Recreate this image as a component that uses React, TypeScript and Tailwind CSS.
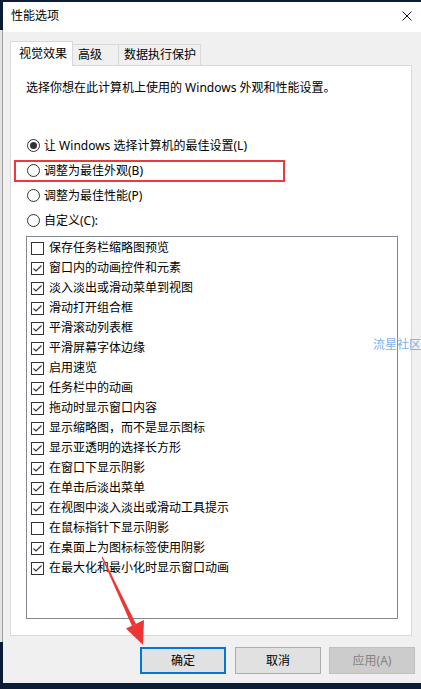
import React from 'react';

const font = { fontFamily: '"Noto Sans", "Noto Sans CJK SC", sans-serif' };

const radios = [
  { label: '让 Windows 选择计算机的最佳设置(L)', checked: true },
  { label: '调整为最佳外观(B)', checked: false },
  { label: '调整为最佳性能(P)', checked: false },
  { label: '自定义(C):', checked: false },
];

const options = [
  { label: '保存任务栏缩略图预览', checked: false },
  { label: '窗口内的动画控件和元素', checked: true },
  { label: '淡入淡出或滑动菜单到视图', checked: true },
  { label: '滑动打开组合框', checked: true },
  { label: '平滑滚动列表框', checked: true },
  { label: '平滑屏幕字体边缘', checked: true },
  { label: '启用速览', checked: true },
  { label: '任务栏中的动画', checked: true },
  { label: '拖动时显示窗口内容', checked: true },
  { label: '显示缩略图，而不是显示图标', checked: true },
  { label: '显示亚透明的选择长方形', checked: true },
  { label: '在窗口下显示阴影', checked: true },
  { label: '在单击后淡出菜单', checked: true },
  { label: '在视图中淡入淡出或滑动工具提示', checked: true },
  { label: '在鼠标指针下显示阴影', checked: false },
  { label: '在桌面上为图标标签使用阴影', checked: true },
  { label: '在最大化和最小化时显示窗口动画', checked: true },
];

const Radio = ({ checked }: { checked: boolean }) => (
  <span className="flex h-[13px] w-[13px] shrink-0 items-center justify-center rounded-full border border-[#333333] bg-white">
    {checked && <span className="h-[7px] w-[7px] rounded-full bg-[#333333]" />}
  </span>
);

const Check = ({ checked }: { checked: boolean }) => (
  <span className="flex h-[13px] w-[13px] shrink-0 items-center justify-center border border-[#333333] bg-white">
    {checked && (
      <svg width="11" height="11" viewBox="0 0 11 11">
        <polyline points="1.5,5.5 4,8 9.5,2.5" fill="none" stroke="#333333" strokeWidth="1.1" />
      </svg>
    )}
  </span>
);

export default function App() {
  return (
    <div className="relative flex h-[689px] w-[421px] overflow-hidden bg-[#0b1c36] pb-[6px] pt-[2px] text-[12px] text-black" style={font}>
      {/* sliver of the window behind */}
      <div className="flex w-[3px] flex-col">
        <div className="h-[28px] bg-[#0b1c36]" />
        <div className="flex-1 border-r border-[#a0a0a0] bg-[#e4e4e4]" />
        <div className="h-[41px] bg-[#0b1c36]" />
      </div>

      <div className="flex flex-1 flex-col bg-[#f0f0f0]">
        {/* Title bar */}
        <div className="flex h-[30px] items-center justify-between bg-white pb-[2px] pl-[8px] pr-[9px]">
          <span className="leading-[16px]">性能选项</span>
          <svg width="10" height="10" viewBox="0 0 10 10">
            <path d="M0.5 0.5 L9.5 9.5 M9.5 0.5 L0.5 9.5" stroke="#111" strokeWidth="1" />
          </svg>
        </div>

        <div className="flex flex-1 flex-col pl-[7px] pt-[9px]">
          {/* Tabs */}
          <div className="relative z-10 mr-[9px] flex h-[24px] items-end">
            <div className="-mb-px flex h-[25px] w-[63px] items-center border border-b-0 border-[#d9d9d9] bg-white pl-[8px] leading-[16px]">
              视觉效果
            </div>
            <div className="flex h-[21px] w-[46px] items-center border-r border-t border-[#d9d9d9] pl-[5px] leading-[16px]">
              高级
            </div>
            <div className="flex h-[21px] w-[82px] items-center border-r border-t border-[#d9d9d9] pl-[5px] leading-[16px]">
              数据执行保护
            </div>
          </div>

          {/* Panel */}
          <div className="relative mr-[9px] flex h-[571px] flex-col border border-[#d9d9d9] bg-white pl-[15px] pt-[14px]">
            <p className="leading-[16px]">选择你想在此计算机上使用的 Windows 外观和性能设置。</p>

            <div className="mt-[37px] flex flex-col">
              {radios.map((r) => (
                <div key={r.label} className="flex h-[25px] items-center gap-[4px] pl-[1px] leading-[16px]">
                  <Radio checked={r.checked} />
                  <span>{r.label}</span>
                </div>
              ))}
            </div>

            <div className="absolute left-[3px] top-[94px] h-[22px] w-[271px] border-2 border-[#ea3a3d]" />

            <div className="mt-[3px] flex h-[383px] w-[372px] flex-col border border-[#828790] bg-white pl-[4px] pt-[1px]">
              {options.map((o) => (
                <div key={o.label} className="flex h-[20px] items-center gap-[5px] leading-[16px]">
                  <Check checked={o.checked} />
                  <span>{o.label}</span>
                </div>
              ))}
            </div>
          </div>

          {/* Buttons */}
          <div className="mr-[6px] mt-[11px] flex justify-end">
            <button className="flex h-[27px] w-[86px] items-center justify-center border-2 border-[#0078d7] bg-[#e1e1e1] leading-[16px]">
              确定
            </button>
            <button className="ml-[9px] flex h-[27px] w-[86px] items-center justify-center border border-[#adadad] bg-[#e1e1e1] leading-[16px]">
              取消
            </button>
            <button className="ml-[8px] flex h-[27px] w-[86px] items-center justify-center border border-[#bfbfbf] bg-[#cccccc] leading-[16px] text-[#838383]">
              应用(A)
            </button>
          </div>
        </div>
      </div>

      {/* watermark */}
      <span className="absolute left-[373px] top-[337px] leading-[16px] text-[#7fb2ea]">流星社区</span>

      {/* red arrow annotation */}
      <svg className="pointer-events-none absolute left-0 top-0" width="421" height="689" viewBox="0 0 421 689">
        <polygon points="101.5,557 102.8,557 136,624 132,626" fill="#ee3535" />
        <polygon points="143,645 126,628.5 144,620" fill="#ee3535" />
      </svg>
    </div>
  );
}
